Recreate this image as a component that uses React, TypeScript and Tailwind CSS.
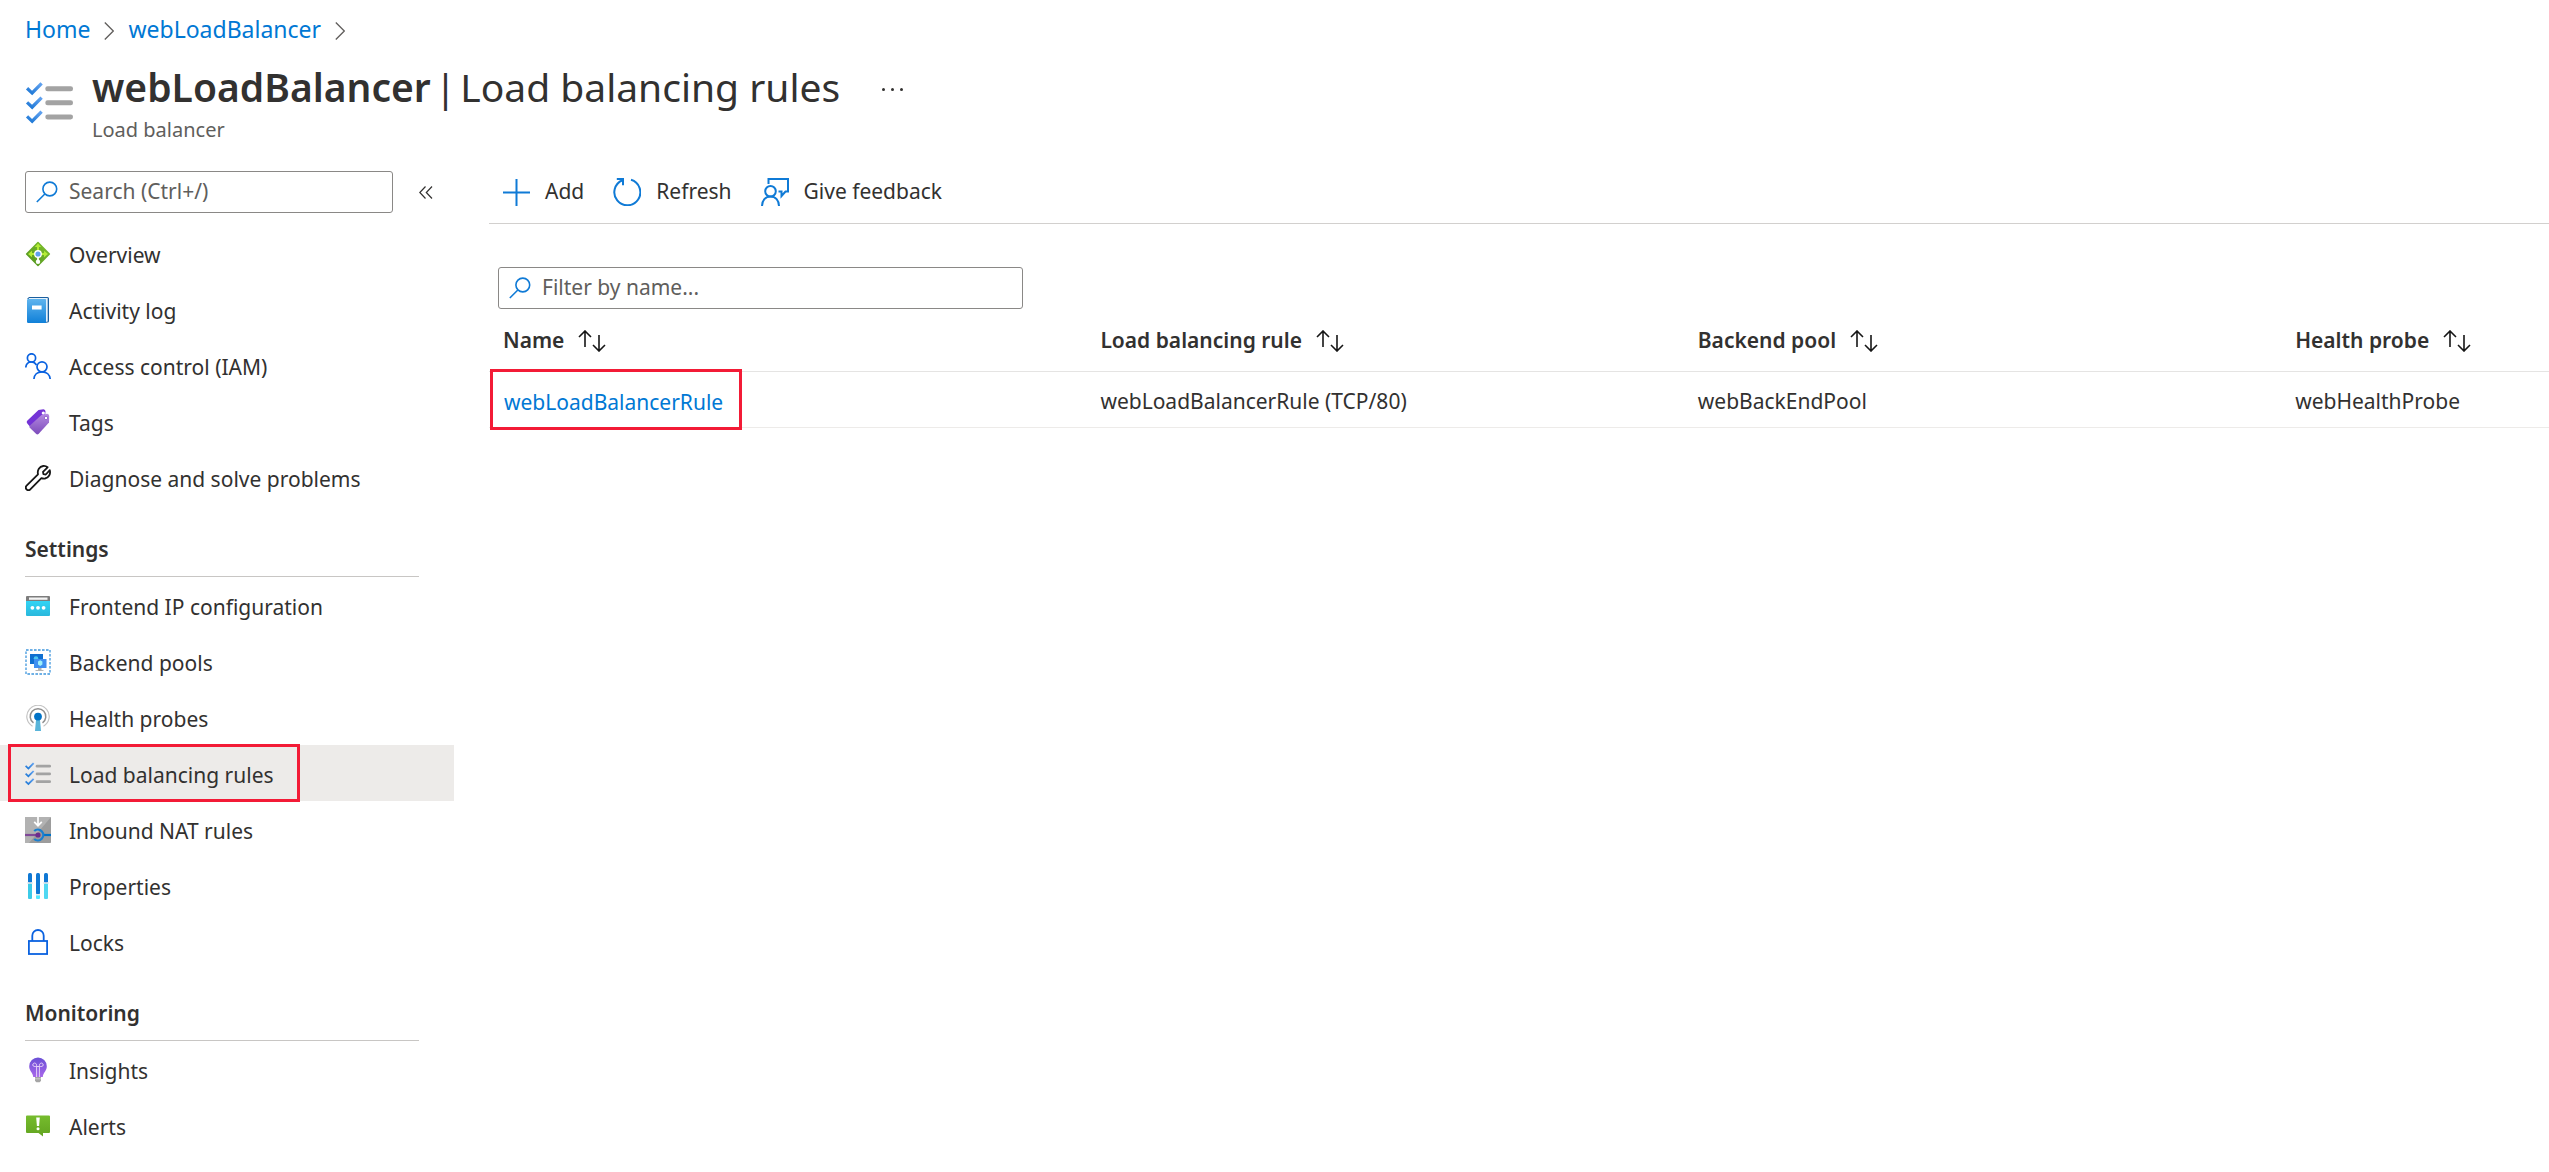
import type { ReactNode } from "react";

type IconProps = { className?: string };

const LIST_ROWS = [3, 11.4, 19.8];

function RulesIcon({ className }: IconProps) {
  return (
    <svg viewBox="0 0 28 25" fill="none" className={className} aria-hidden="true">
      <defs>
        <linearGradient id="tick" x1="0" y1="1" x2="0.6" y2="0">
          <stop offset="0" stopColor="#0f6fd0" />
          <stop offset="1" stopColor="#5ea0ef" />
        </linearGradient>
      </defs>
      {LIST_ROWS.map((y) => (
        <g key={y}>
          <path
            d={`M0 ${y + 1.4} L1.3 ${y} L3.6 ${y + 2.2} L8.6 ${y - 2.8} L10 ${y - 1.5} L3.7 ${y + 4.9} Z`}
            fill="url(#tick)"
          />
          <rect x="11.5" y={y - 0.5} width="16.5" height="3" rx="1.4" fill="#a3a3a3" />
        </g>
      ))}
    </svg>
  );
}

function SearchIcon({ className }: IconProps) {
  return (
    <svg viewBox="0 0 22 22" fill="none" stroke="#0f7ad6" strokeWidth="1.6" className={className} aria-hidden="true">
      <circle cx="13.8" cy="8" r="6.9" />
      <path d="M8.8 13 0.8 21" />
    </svg>
  );
}

function OverviewIcon({ className }: IconProps) {
  return (
    <svg viewBox="0 0 26 26" className={className} aria-hidden="true">
      <defs>
        <linearGradient id="lb" x1="0" y1="0" x2="0" y2="1">
          <stop offset="0" stopColor="#76b82a" />
          <stop offset="1" stopColor="#5a9c22" />
        </linearGradient>
      </defs>
      <rect x="4.2" y="4.2" width="17.6" height="17.6" rx="0.8" transform="rotate(45 13 13)" fill="url(#lb)" />
      <path
        d="M13 2.4 16.2 6H14v4h-2V6H9.800ZM3 13l4-3.300V12h3v2H7v2.300ZM23 13l-4-3.300V12h-3v2h3v2.300Z"
        fill="#b4ec36"
      />
      <path d="M13 14v7" stroke="#fff" strokeWidth="1.8" />
      <circle cx="13" cy="20.800" r="2.200" fill="#fff" />
      <circle cx="13" cy="13" r="3.900" fill="#fff" />
      <circle cx="13" cy="13" r="2.600" fill="#5ea0ef" />
    </svg>
  );
}

function ActivityIcon({ className }: IconProps) {
  return (
    <svg viewBox="0 0 26 26" className={className} aria-hidden="true">
      <defs>
        <linearGradient id="book" x1="0" y1="0" x2="0" y2="1">
          <stop offset="0" stopColor="#5fb4ee" />
          <stop offset="1" stopColor="#1080d8" />
        </linearGradient>
      </defs>
      <path d="M4 0H22.500A1.500 1.500 0 0 1 24 1.500V24A1.500 1.500 0 0 1 22.500 25.500L20 26V2H2Z" fill="#1b5f9f" />
      <path d="M4.200 1H22.700V24.500L20.500 25V2.500H3Z" fill="#e4f1fb" />
      <path d="M2 3.200A1.200 1.200 0 0 1 3.200 2H19.800A1.200 1.200 0 0 1 21 3.200V26H3.200A1.200 1.200 0 0 1 2 24.800Z" fill="url(#book)" />
      <rect x="7" y="8.500" width="9.600" height="4" fill="#fff" />
    </svg>
  );
}

function AccessIcon({ className }: IconProps) {
  return (
    <svg viewBox="0 0 26 26" fill="none" stroke="#0a62e0" strokeWidth="1.700" className={className} aria-hidden="true">
      <circle cx="6.500" cy="4.900" r="4.100" />
      <circle cx="17" cy="13.800" r="5" />
      <path d="M0.800 14.500C1 11.200 3.300 9 6.500 9c2.500 0 4 1.200 5 3" />
      <path d="M8.900 26.500C9 21.800 12.400 18.800 17 18.800s8 3 8.200 7.700" />
    </svg>
  );
}

function TagsIcon({ className }: IconProps) {
  return (
    <svg viewBox="0 0 26 26" className={className} aria-hidden="true">
      <defs>
        <linearGradient id="tag" x1="0" y1="0" x2="0" y2="1">
          <stop offset="0" stopColor="#b489e0" />
          <stop offset="1" stopColor="#7c4bbb" />
        </linearGradient>
      </defs>
      <path d="M13.500 1 18.500 0.300Q20.500 0.500 20.500 2.500L20 8 7 20 2.300 14.500Q1 13 2.200 11.800Z" fill="#7433d6" />
      <path d="M16.500 6 22.200 4.800Q24.200 5 24.200 7L24 13.500 13.500 25Q12.300 26 11 24.800L4.800 18.800Q3.800 17.600 5 16.400Z" fill="url(#tag)" />
      <circle cx="18.300" cy="4" r="1.600" fill="#fff" />
      <circle cx="21" cy="9" r="1.700" fill="#fff" stroke="#7d46c4" strokeWidth="0.700" />
    </svg>
  );
}

function WrenchIcon({ className }: IconProps) {
  return (
    <svg viewBox="0 0 26 26" fill="none" stroke="#161616" strokeWidth="1.800" strokeLinejoin="round" className={className} aria-hidden="true">
      <path d="M22.600 2.300 18 6.800l0.400 2.400 2.400 0.300 4-4.300C25.800 9 23.800 12.800 20 13.500c-1.400 0.200-2.500 0-3.600-0.400L5.300 24.300a2.600 2.600 0 0 1-3.700-3.700L13 9.300C12 5 14.500 1.500 18.200 1c1.600-0.200 3 0.200 4.400 1.300Z" />
    </svg>
  );
}

function FrontendIcon({ className }: IconProps) {
  return (
    <svg viewBox="0 0 26 26" className={className} aria-hidden="true">
      <defs>
        <linearGradient id="front" x1="0" y1="0" x2="0" y2="1">
          <stop offset="0" stopColor="#32d4f5" />
          <stop offset="1" stopColor="#2ab8dc" />
        </linearGradient>
      </defs>
      <path d="M1 8H25V22a1 1 0 0 1-1 1H2a1 1 0 0 1-1-1Z" fill="url(#front)" />
      <path d="M2 3H24a1 1 0 0 1 1 1V8H1V4A1 1 0 0 1 2 3Z" fill="#7d7d7d" />
      <rect x="4" y="4.500" width="18.500" height="2.300" fill="#f4f4f4" />
      <circle cx="7.400" cy="14.800" r="1.900" fill="#fff" />
      <circle cx="13" cy="14.800" r="1.900" fill="#fff" />
      <circle cx="18.600" cy="14.800" r="1.900" fill="#fff" />
    </svg>
  );
}

function BackendIcon({ className }: IconProps) {
  return (
    <svg viewBox="0 0 26 26" className={className} aria-hidden="true">
      <rect x="1" y="1" width="24" height="24" fill="none" stroke="#3f97dd" strokeWidth="1.300" strokeDasharray="2.600 1.400" />
      <rect x="5" y="5" width="13" height="10" fill="#0f6fd0" />
      <path d="M9 14.500h3V19H9z" fill="#1468bd" />
      <circle cx="11" cy="9.500" r="2.300" fill="#4fc8f0" />
      <path d="M13 18h3.500v3h2V22h-8v-1H13z" fill="#b5b5b5" />
      <rect x="9" y="10" width="12.500" height="9" fill="#3f8ff0" />
      <path d="M13 12.500 15.200 11.200 17.400 12.500V15.500L15.200 17 13 15.500Z" fill="#9df0fb" />
    </svg>
  );
}

function ProbeIcon({ className }: IconProps) {
  return (
    <svg viewBox="0 0 26 26" fill="none" className={className} aria-hidden="true">
      <path d="M7.500 21.200A11.200 11.200 0 1 1 18.500 21.200" stroke="#c4c4c4" strokeWidth="1.200" />
      <path d="M8.500 17.800A7.800 7.800 0 1 1 17.500 17.800" stroke="#8f8f8f" strokeWidth="1.500" />
      <path d="M11.200 13H14.800L16 26H10Z" fill="#59b4d9" />
      <circle cx="13" cy="11.600" r="3.900" fill="#0072c6" />
    </svg>
  );
}

function NatIcon({ className }: IconProps) {
  return (
    <svg viewBox="0 0 26 26" fill="none" className={className} aria-hidden="true">
      <rect width="26" height="26" rx="0.800" fill="#9c9c9c" />
      <path d="M0 0H26L4 26H0Z" fill="#b2b2b2" />
      <path d="M13 0V8M9.200 4.800 13 8.700 16.800 4.800" stroke="#fff" strokeWidth="1.700" />
      <path d="M0 18H12" stroke="#804998" strokeWidth="2.200" />
      <path d="M18.500 18H26" stroke="#0072c6" strokeWidth="2.200" />
      <path d="M9.200 14A5.400 5.400 0 1 1 9.200 22" stroke="#1a7fd0" strokeWidth="2.300" />
      <circle cx="13" cy="18" r="2.600" fill="#6b2c8c" />
    </svg>
  );
}

function PropertiesIcon({ className }: IconProps) {
  return (
    <svg viewBox="0 0 26 26" className={className} aria-hidden="true">
      <rect x="3" y="10" width="4" height="16" rx="1" fill="#3ccbe8" />
      <rect x="11" y="21" width="4" height="5" rx="1" fill="#50e6ff" />
      <rect x="19" y="10" width="4" height="16" rx="1" fill="#50d8f2" />
      <rect x="3" y="0" width="4" height="10" rx="1.500" fill="#0f78d4" />
      <rect x="11" y="0" width="4" height="21.500" rx="1.500" fill="#0f78d4" />
      <rect x="19" y="0" width="4" height="10" rx="1.500" fill="#0f78d4" />
      <path d="M2.200 9.300h5.600v1.500H2.200zM18.200 9.300h5.600v1.500h-5.600zM11 21h4v1.500h-4z" fill="#e2e8ec" />
    </svg>
  );
}

function LockIcon({ className }: IconProps) {
  return (
    <svg viewBox="0 0 26 26" fill="none" stroke="#0a62e0" strokeWidth="1.800" className={className} aria-hidden="true">
      <rect x="3.900" y="12" width="18.200" height="13" />
      <path d="M7.300 12V6.700a5.700 5.700 0 0 1 11.400 0V12" />
    </svg>
  );
}

function InsightsIcon({ className }: IconProps) {
  return (
    <svg viewBox="0 0 26 26" fill="none" className={className} aria-hidden="true">
      <defs>
        <linearGradient id="bulb" x1="0" y1="0" x2="0" y2="1">
          <stop offset="0" stopColor="#6a4fd6" />
          <stop offset="1" stopColor="#a868ea" />
        </linearGradient>
      </defs>
      <path d="M13 0.500a8.800 8.800 0 0 1 8.800 8.800c0 5-3.600 6-4 10.700H8.200C7.800 15.300 4.200 14.300 4.200 9.300A8.800 8.800 0 0 1 13 0.500Z" fill="url(#bulb)" />
      <path d="M11.600 20V8.500M14.400 20V8.500M11.600 8.600c0-3.600-4-3-3.800-0.600 0.200 1.800 2 1.500 3.800 1.500h2.800c1.800 0 3.600 0.300 3.800-1.500 0.200-2.400-3.800-3-3.800 0.600" stroke="#e4cff8" strokeWidth="1" />
      <path d="M10 20h6v3.800l-1.300 1.500h-3.400L10 23.800Z" fill="#a5a5a5" />
      <path d="M10 21.800h6" stroke="#d6d6d6" strokeWidth="0.800" />
    </svg>
  );
}

function AlertsIcon({ className }: IconProps) {
  return (
    <svg viewBox="0 0 26 26" className={className} aria-hidden="true">
      <defs>
        <linearGradient id="alert" x1="0" y1="0" x2="0" y2="1">
          <stop offset="0" stopColor="#76bc2d" />
          <stop offset="1" stopColor="#62a420" />
        </linearGradient>
      </defs>
      <path d="M2 2.500H24a1 1 0 0 1 1 1V19a1 1 0 0 1-1 1H18v3.500L13.500 20H2a1 1 0 0 1-1-1V3.500a1 1 0 0 1 1-1Z" fill="url(#alert)" />
      <path d="M11.200 4.500h3.600l-0.700 8.500h-2.200Z" fill="#fff" />
      <circle cx="13" cy="15.800" r="1.500" fill="#fff" />
    </svg>
  );
}

function SortIcon() {
  return (
    <svg viewBox="0 0 28 22" fill="none" stroke="#161616" strokeWidth="1.600" className="h-[22px] w-7" aria-hidden="true">
      <path d="M7 17V1M1 7 7 1l6 6M21 5v16M15 15l6 6 6-6" />
    </svg>
  );
}

function Crumb() {
  return (
    <svg viewBox="0 0 10 18" fill="none" stroke="#605e5c" strokeWidth="1.300" className="mt-1 h-[18px] w-[10px]" aria-hidden="true">
      <path d="M0.800 0.500 9.300 9 0.800 17.500" />
    </svg>
  );
}

type NavEntry = { label: string; Icon: (p: IconProps) => ReactNode; active?: boolean };

const MAIN: NavEntry[] = [
  { label: "Overview", Icon: OverviewIcon },
  { label: "Activity log", Icon: ActivityIcon },
  { label: "Access control (IAM)", Icon: AccessIcon },
  { label: "Tags", Icon: TagsIcon },
  { label: "Diagnose and solve problems", Icon: WrenchIcon },
];

const SETTINGS: NavEntry[] = [
  { label: "Frontend IP configuration", Icon: FrontendIcon },
  { label: "Backend pools", Icon: BackendIcon },
  { label: "Health probes", Icon: ProbeIcon },
  { label: "Load balancing rules", Icon: RulesIcon, active: true },
  { label: "Inbound NAT rules", Icon: NatIcon },
  { label: "Properties", Icon: PropertiesIcon },
  { label: "Locks", Icon: LockIcon },
];

const MONITORING: NavEntry[] = [
  { label: "Insights", Icon: InsightsIcon },
  { label: "Alerts", Icon: AlertsIcon },
];

function NavList({ items }: { items: NavEntry[] }) {
  return (
    <ul>
      {items.map(({ label, Icon, active }) => (
        <li key={label} className="relative">
          <a
            href="#"
            aria-current={active ? "page" : undefined}
            className={`flex h-14 items-center gap-[18px] pt-px pl-[25px] ${active ? "bg-[#edebe9]" : ""}`}
          >
            <Icon className="size-[26px] shrink-0" />
            <span className="mt-0.5 leading-7">{label}</span>
          </a>
          {active && (
            <span className="pointer-events-none absolute -inset-y-px left-2 w-[292px] border-[3px] border-[#f31b36]" />
          )}
        </li>
      ))}
    </ul>
  );
}

function NavSection({ title, items }: { title: string; items: NavEntry[] }) {
  return (
    <section>
      <div className="mr-[35px] ml-[25px] flex h-[72px] items-end border-b border-[#c8c6c4] pb-[13px]">
        <h2 className="leading-7 font-semibold">{title}</h2>
      </div>
      <NavList items={items} />
    </section>
  );
}

const COLUMNS = ["Name", "Load balancing rule", "Backend pool", "Health probe"];

export default function App() {
  return (
    <div className="min-h-screen overflow-hidden bg-white font-['Noto_Sans',sans-serif] text-[21px] text-[#323130]">
      <nav aria-label="Breadcrumb" className="flex h-[58px] items-center gap-[14px] pl-[25px] text-[23px] text-[#0078d4]">
        <a href="#" className="leading-7">Home</a>
        <Crumb />
        <a href="#" className="leading-7">webLoadBalancer</a>
        <Crumb />
      </nav>

      <header className="flex gap-[18px] pl-[25px]">
        <RulesIcon className="mt-[24px] h-[42px] w-[49px] shrink-0" />
        <div>
          <div className="flex items-center gap-[42px]">
            <h1 className="flex gap-1 text-[39px] leading-[58px]">
              <span className="font-semibold">webLoadBalancer</span>
              <span>|</span>
              <span>Load balancing rules</span>
            </h1>
            <button type="button" aria-label="More" className="mt-1 flex gap-[6px]">
              <span className="size-[3px] rounded-full bg-[#323130]" />
              <span className="size-[3px] rounded-full bg-[#323130]" />
              <span className="size-[3px] rounded-full bg-[#323130]" />
            </button>
          </div>
          <p className="text-[20px] leading-7 text-[#605e5c]">Load balancer</p>
        </div>
      </header>

      <div className="flex pt-[27px]">
        <aside className="w-[454px] shrink-0">
          <div className="mb-3 flex items-center pl-[25px]">
            <label className="flex h-[42px] w-[368px] items-center gap-[11px] rounded-[3px] border border-[#8a8886] px-[10px]">
              <SearchIcon className="size-[22px] shrink-0" />
              <input
                type="text"
                aria-label="Search"
                placeholder="Search (Ctrl+/)"
                className="w-full min-w-0 bg-transparent outline-none placeholder:text-[#605e5c]"
              />
            </label>
            <button type="button" aria-label="Collapse menu" className="ml-[26px]">
              <svg viewBox="0 0 14 13" fill="none" stroke="#323130" strokeWidth="1.200" className="h-[13px] w-[14px]">
                <path d="M6.500 0.500 0.800 6.500 6.500 12.500M13 0.500 7.300 6.500 13 12.500" />
              </svg>
            </button>
          </div>
          <nav aria-label="Resource menu">
            <NavList items={MAIN} />
            <NavSection title="Settings" items={SETTINGS} />
            <NavSection title="Monitoring" items={MONITORING} />
          </nav>
        </aside>

        <main className="ml-[35px] min-w-0 flex-1">
          <div className="flex h-[53px] items-start gap-[29px] border-b border-[#d2d0ce] pl-[14px]">
            <button type="button" className="flex h-[42px] items-center gap-[15px]">
              <svg viewBox="0 0 27 27" fill="none" stroke="#0f7ad6" strokeWidth="2" className="size-[27px]">
                <path d="M13.500 0v27M0 13.500h27" />
              </svg>
              Add
            </button>
            <button type="button" className="flex h-[42px] items-center gap-[15px]">
              <svg viewBox="0 0 28 28" fill="none" stroke="#0f7ad6" strokeWidth="2" className="size-7">
                <path d="M18 1.800A13 13 0 1 1 9.500 2.200M3.800 0.900H10V7.200" />
              </svg>
              Refresh
            </button>
            <button type="button" className="flex h-[42px] items-center gap-[15px]">
              <svg viewBox="0 0 28 28" fill="none" stroke="#0f7ad6" strokeWidth="2" className="size-7">
                <path d="M7.500 6V1H27V13.500H24.500L20.500 18V13.500H17.500" />
                <circle cx="9.500" cy="13.200" r="5.300" />
                <path d="M1 28c0-5.500 3.500-9.500 8.500-9.500S18 22.500 18 28" />
              </svg>
              Give feedback
            </button>
          </div>

          <label className="mt-[43px] ml-[9px] flex h-[42px] w-[525px] items-center gap-[11px] rounded-[3px] border border-[#8a8886] px-[10px]">
            <SearchIcon className="size-[22px] shrink-0" />
            <input
              type="text"
              aria-label="Filter by name"
              placeholder="Filter by name..."
              className="w-full min-w-0 bg-transparent outline-none placeholder:text-[#605e5c]"
            />
          </label>

          <table className="w-full table-fixed text-left">
            <thead>
              <tr className="h-[62px] border-b border-[#e5e4e3]">
                {COLUMNS.map((name) => (
                  <th key={name} className="w-[29%] pt-0.5 pl-[14px] font-semibold last:w-[13%]">
                    <button type="button" className="flex items-center gap-[14px] whitespace-nowrap">
                      {name}
                      <SortIcon />
                    </button>
                  </th>
                ))}
              </tr>
            </thead>
            <tbody>
              <tr className="h-14 border-b border-[#edebe9]">
                <td className="relative pt-2 pl-[15px]">
                  <a href="#" className="text-[#0078d4]">webLoadBalancerRule</a>
                  <span className="pointer-events-none absolute -top-[3px] -bottom-[3px] left-px w-[252px] border-[3px] border-[#f31b36]" />
                </td>
                <td className="pt-1.5 pl-[14px]">webLoadBalancerRule (TCP/80)</td>
                <td className="pt-1.5 pl-[14px]">webBackEndPool</td>
                <td className="pt-1.5 pl-[14px]">webHealthProbe</td>
              </tr>
            </tbody>
          </table>
        </main>
      </div>
    </div>
  );
}
